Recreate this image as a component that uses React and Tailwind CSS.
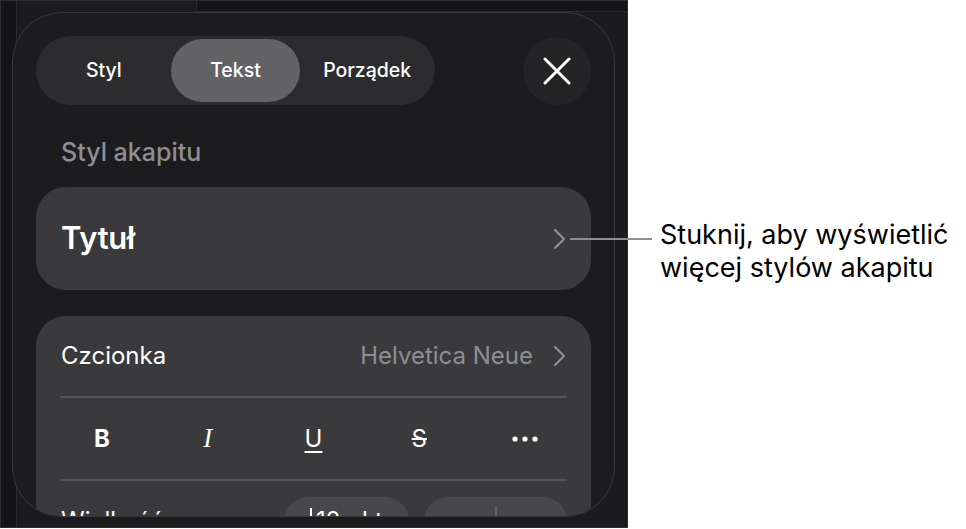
import React from 'react'

function Chevron({ className }) {
  return (
    <svg className={className} width="13" height="22" viewBox="0 0 13 22" fill="none">
      <path d="M2 2 L11 11 L2 20" stroke="#8e8e93" strokeWidth="2.2" strokeLinecap="round" strokeLinejoin="round" />
    </svg>
  )
}

function Segmented() {
  const items = ['Styl', 'Tekst', 'Porządek']
  return (
    <div className="flex w-[399px] h-[69px] rounded-full bg-[#2c2c2e] p-[3px]">
      {items.map((t) => (
        <div
          key={t}
          className={
            t === 'Tekst'
              ? 'flex-1 mx-[2px] flex items-center justify-center rounded-full bg-[#636366] text-white text-[19.5px] font-medium'
              : 'flex-1 flex items-center justify-center text-white text-[19.5px] font-medium'
          }
        >
          {t}
        </div>
      ))}
    </div>
  )
}

export default function App() {
  return (
    <div className="relative flex w-[966px] h-[529px] bg-white" style={{ fontFamily: 'Inter, "Noto Sans", sans-serif' }}>
      <div className="relative w-[628px] h-[528px] bg-[#141416] border border-[#2f2f31] overflow-hidden">
        {/* dimmed app behind the sheet */}
        <div className="absolute left-[15px] top-0 bottom-0 right-0 bg-[#1b1b1d] border-l border-[#2a2a2c]" />
        <div className="absolute left-[195px] top-0 right-0 h-[11px] bg-[#141417] border-l border-b border-[#2a2a2c]" />

        <div className="relative pl-[11px] pt-[11px]">
          <div className="w-[603px] h-[505px] rounded-[50px] border border-[#3a3a3c] bg-[#1c1c1e] overflow-hidden px-[23px] pt-[23px]">
            <div className="flex items-center justify-between">
              <Segmented />
              <button className="w-[68px] h-[68px] rounded-full bg-[#242426] flex items-center justify-center">
                <svg width="28" height="28" viewBox="0 0 28 28" fill="none">
                  <path d="M2 2 L26 26 M26 2 L2 26" stroke="white" strokeWidth="3" strokeLinecap="round" />
                </svg>
              </button>
            </div>

            <div className="mt-[32px] pl-[25px] text-[25px] leading-[30px] font-medium text-[#8e8e93]">Styl akapitu</div>

            <div className="mt-[20px] h-[103px] rounded-[30px] bg-[#3a3a3c] flex items-center justify-between pl-[25px] pr-[25px]">
              <span className="text-white text-[31px] font-semibold tracking-[-0.3px]">Tytuł</span>
              <Chevron />
            </div>

            <div className="mt-[26px] rounded-[30px] bg-[#3a3a3c] pb-[40px]">
              <div className="h-[80px] flex items-center justify-between pl-[25px] pr-[25px]">
                <span className="text-white text-[24px]">Czcionka</span>
                <div className="flex items-center gap-[20px]">
                  <span className="text-[#8e8e93] text-[24px]">Helvetica Neue</span>
                  <Chevron />
                </div>
              </div>
              <div className="mx-[24px] h-[2px] bg-[#545458]" />
              <div className="h-[81px] grid grid-cols-5 px-[13px] items-center text-white">
                <span className="text-center text-[24px] font-bold">B</span>
                <span className="text-center text-[27px] italic" style={{ fontFamily: '"Liberation Serif", serif' }}>I</span>
                <span className="text-center text-[24px] underline underline-offset-[4px] decoration-[2px]">U</span>
                <span className="text-center text-[24px] line-through decoration-[2px]">S</span>
                <span className="flex justify-center">
                  <svg width="26" height="6" viewBox="0 0 26 6">
                    <circle cx="3" cy="3" r="2.6" fill="white" />
                    <circle cx="13" cy="3" r="2.6" fill="white" />
                    <circle cx="23" cy="3" r="2.6" fill="white" />
                  </svg>
                </span>
              </div>
              <div className="mx-[24px] h-[2px] bg-[#545458]" />
              <div className="h-[80px] flex items-center justify-between pl-[25px] pr-[24px]">
                <span className="text-white text-[24px]">Wielkość</span>
                <div className="flex items-center gap-[15px]">
                  <div className="w-[125px] h-[48px] rounded-full bg-[#48484a] flex items-center justify-center text-white text-[24px]">
                    <span className="w-[2px] h-[26px] bg-white mr-[4px]" />12 pkt
                  </div>
                  <div className="w-[143px] h-[48px] rounded-full bg-[#48484a] flex items-center text-white text-[26px]">
                    <span className="flex-1 text-center">–</span>
                    <span className="w-[2px] h-[30px] bg-[#636366]" />
                    <span className="flex-1 text-center">+</span>
                  </div>
                </div>
              </div>
            </div>
          </div>
        </div>
      </div>

      {/* callout */}
      <div className="absolute left-[570px] top-[238px] w-[82px] h-[2px] bg-[#8e8e93]" />
      <div className="pl-[32px] pt-[218px] text-[27px] leading-[33px] text-black whitespace-nowrap">
        <div>Stuknij, aby wyświetlić</div>
        <div>więcej stylów akapitu</div>
      </div>
    </div>
  )
}
